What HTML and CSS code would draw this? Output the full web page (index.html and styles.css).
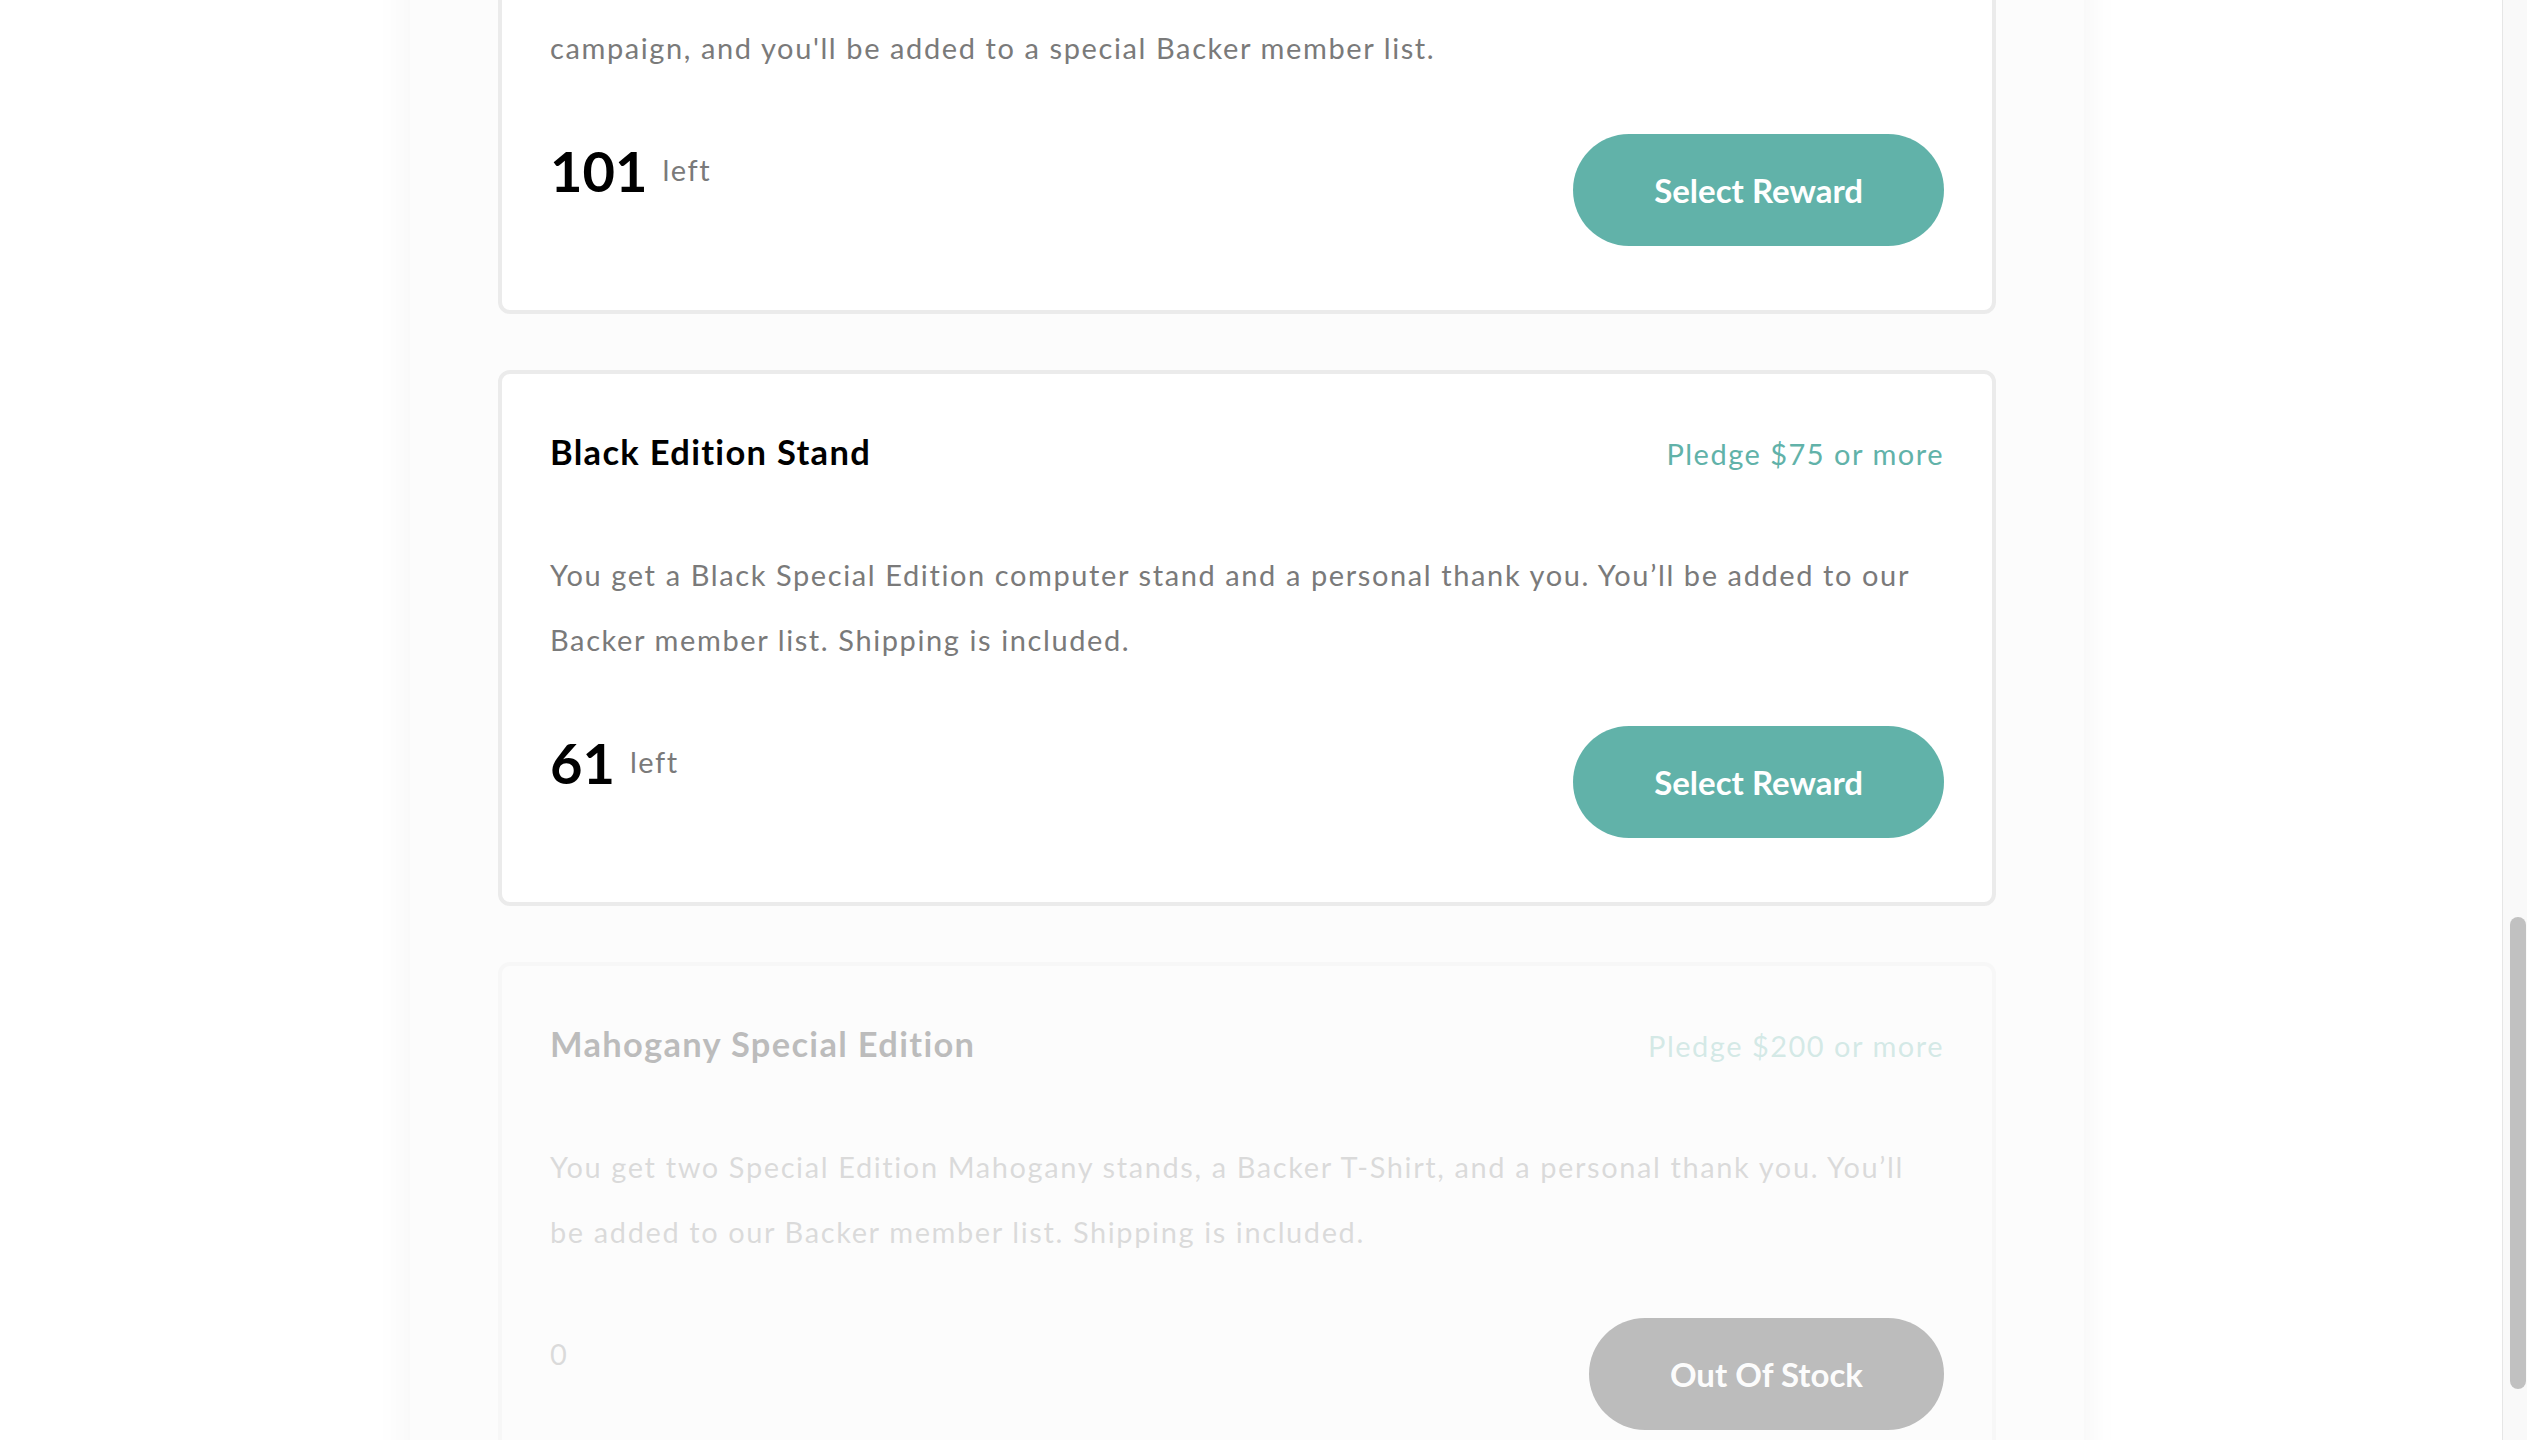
FILE: index.html
```html
<!DOCTYPE html>
<html lang="en">
<head>
<meta charset="utf-8">
<title>Rewards</title>
<link rel="stylesheet" href="styles.css">
</head>
<body>
<div class="viewport">
  <main class="page">
    <section class="column">
      <div class="rewards">
        <article class="reward">
          <header class="reward-head">
            <h3 class="reward-title">Bamboo Stand</h3>
            <p class="pledge">Pledge $25 or more</p>
          </header>
          <p class="reward-desc">You get an ergonomic stand made of natural bamboo. You've helped us launch our promotional campaign, and you'll be added to a special Backer member list.</p>
          <footer class="reward-foot">
            <div class="stock"><span class="count">101</span><span class="left">left</span></div>
            <button class="btn">Select Reward</button>
          </footer>
        </article>
        <article class="reward">
          <header class="reward-head">
            <h3 class="reward-title">Black Edition Stand</h3>
            <p class="pledge">Pledge $75 or more</p>
          </header>
          <p class="reward-desc">You get a Black Special Edition computer stand and a personal thank you. You’ll be added to our Backer member list. Shipping is included.</p>
          <footer class="reward-foot">
            <div class="stock"><span class="count">61</span><span class="left">left</span></div>
            <button class="btn">Select Reward</button>
          </footer>
        </article>
        <article class="reward out">
          <header class="reward-head">
            <h3 class="reward-title">Mahogany Special Edition</h3>
            <p class="pledge">Pledge $200 or more</p>
          </header>
          <p class="reward-desc">You get two Special Edition Mahogany stands, a Backer T-Shirt, and a personal thank you. You’ll be added to our Backer member list. Shipping is included.</p>
          <footer class="reward-foot">
            <div class="stock"><span class="left">0</span></div>
            <button class="btn">Out Of Stock</button>
          </footer>
        </article>
      </div>
    </section>
  </main>
  <div class="scrollbar"><div class="thumb"></div></div>
</div>
</body>
</html>
```

FILE: styles.css
```css
html, body {
  margin: 0;
  height: 100%;
  overflow: hidden;
}

body {
  font-family: Lato, "Open Sans", sans-serif;
  background: #ffffff;
}

.viewport {
  display: flex;
  height: 100%;
}

.page {
  flex: 1;
  padding-left: 410px;
  overflow: hidden;
}

.column {
  width: 1674px;
  min-height: 100%;
  box-sizing: border-box;
  padding: 0 88px;
  background: #fcfcfc;
  box-shadow: 0 0 36px rgba(0, 0, 0, 0.05);
}

.rewards {
  display: flex;
  flex-direction: column;
  gap: 56px;
  margin-top: -222px;
}

.reward {
  background: #ffffff;
  border: 4px solid #ebebeb;
  border-radius: 12px;
  padding: 57px 48px 64px 48px;
}

.reward-head {
  display: flex;
  justify-content: space-between;
  align-items: baseline;
  margin-bottom: 71px;
}

.reward-title {
  margin: 0;
  font-size: 34.5px;
  font-weight: 700;
  line-height: 1.2;
  letter-spacing: 1.3px;
  color: #000000;
}

.pledge {
  margin: 0;
  font-size: 29px;
  font-weight: 400;
  line-height: 1.2;
  letter-spacing: 1.5px;
  color: #61b2a9;
}

.reward-desc {
  margin: 0;
  font-size: 29px;
  line-height: 64.5px;
  letter-spacing: 1.6px;
  color: #7a7a7a;
}

.reward-foot {
  display: flex;
  justify-content: space-between;
  align-items: flex-start;
  margin-top: 53.5px;
}

.stock {
  display: flex;
  align-items: center;
  min-height: 68px;
  margin-top: 3px;
}

.count {
  font-size: 56px;
  font-weight: 700;
  line-height: 1.2;
  color: #000000;
  margin-right: 15px;
}

.left {
  font-size: 29px;
  line-height: 1.2;
  letter-spacing: 1.5px;
  color: #7a7a7a;
}

.btn {
  height: 112px;
  padding: 0 81px;
  border: 0;
  border-radius: 56px;
  background: #61b2a9;
  color: #ffffff;
  font-family: inherit;
  font-size: 33px;
  font-weight: 700;
}

.reward.out {
  opacity: 0.25;
}

.reward.out .btn {
  background: #000000;
}

.scrollbar {
  width: 24px;
  border-left: 1px solid #e6e6e6;
  background: #f9f9f9;
  padding-top: 917px;
}

.thumb {
  width: 16px;
  height: 472px;
  margin-left: 7px;
  border-radius: 8px;
  background: #c1c1c1;
}
```
